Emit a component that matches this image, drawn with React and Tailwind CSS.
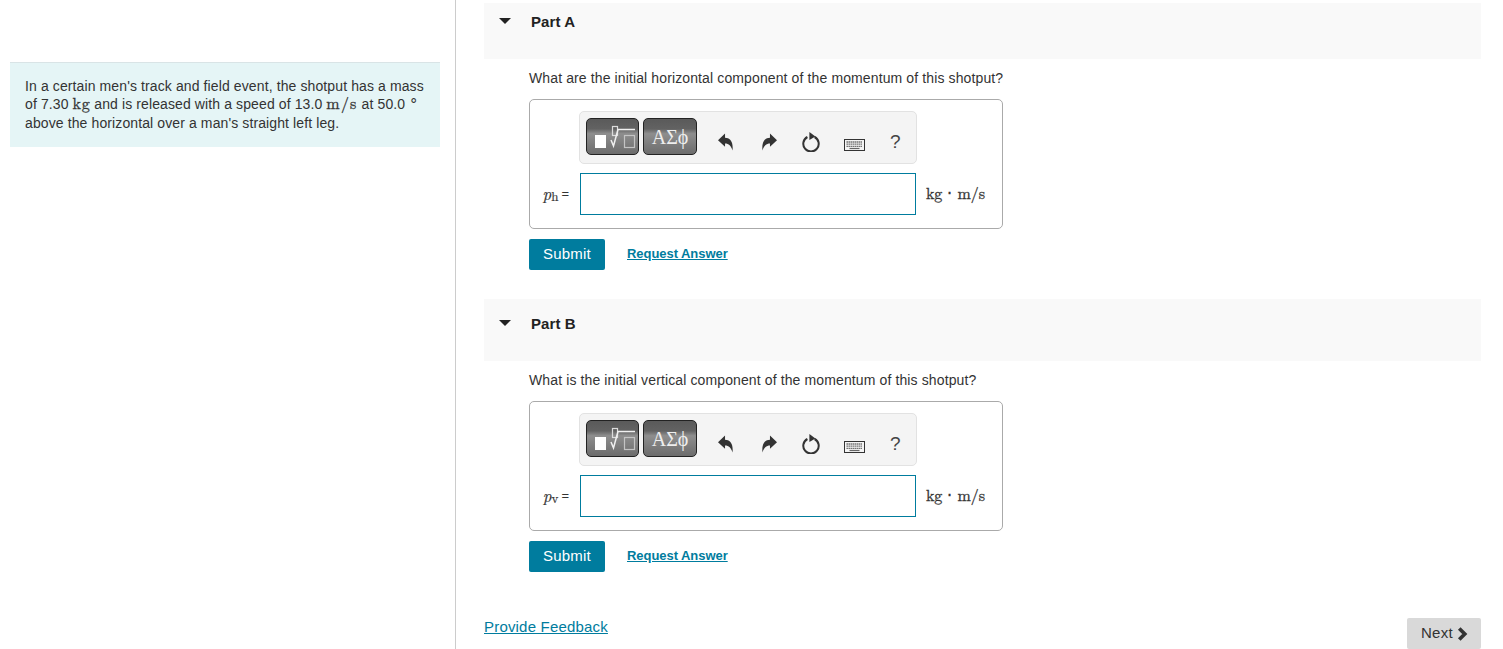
import React from 'react';
import { ChevronRight } from 'lucide-react';

const SANS = { fontFamily: '"Liberation Sans", Arial, sans-serif' };
const serifClass = "font-['Liberation_Serif',serif]";
const mathClass = "font-['Latin_Modern_Roman','Liberation_Serif',serif]";

function TemplatesIcon() {
  return (
    <svg width="51" height="35" viewBox="0 0 51 35" fill="none">
      <rect x="8" y="16" width="11" height="13" fill="#fff" />
      <rect x="25.5" y="7.5" width="5" height="9" stroke="#dcdcdc" strokeWidth="1.2" />
      <path d="M24 21 L26.5 27 L31 10.5 H48" stroke="#f0f0f0" strokeWidth="1.5" />
      <rect x="37.5" y="16.5" width="10" height="12" stroke="#c4c4c4" strokeWidth="1.2" />
    </svg>
  );
}

function UndoIcon({ flip }) {
  return (
    <svg width="15" height="18" viewBox="0 0 16 18" className={flip ? '-scale-x-100' : ''}>
      <path d="M0 7 L7.5 0 V4.4 C12.5 4.4 16.5 8 15.5 18 C14 13 11.5 10.6 7.5 10.6 V14 Z" fill="#333" />
    </svg>
  );
}

function ResetIcon() {
  return (
    <svg width="18" height="20" viewBox="0 0 18 20" fill="none">
      <path d="M5.4 5 A7.7 7.7 0 1 0 12.6 5" stroke="#333" strokeWidth="2" />
      <path d="M7.4 0 L13.4 4.4 L7.4 8 Z" fill="#333" />
    </svg>
  );
}

function KeyboardIcon() {
  return (
    <svg width="21" height="12" viewBox="0 0 21 12" fill="none">
      <rect x="0.5" y="0.5" width="20" height="11" fill="#f4f4f4" stroke="#333" />
      <path d="M2.5 3 H18.5 M2.5 5.2 H18.5 M2.5 7.4 H18.5" stroke="#666" strokeWidth="1.3" strokeDasharray="1.4 .6" />
      <path d="M5.5 9.5 H15.5" stroke="#666" strokeWidth="1.2" />
    </svg>
  );
}

function PaletteButton({ className, children }) {
  return (
    <div className={`flex h-[37px] items-center justify-center rounded-[5px] border border-[#222] bg-[linear-gradient(#5a5a5a_0,#626262_28%,#8e8e8e_42%,#6c6c6c_100%)] ${className}`}>
      {children}
    </div>
  );
}

function Toolbar() {
  return (
    <div className="ml-[49px] flex h-[53px] w-[338px] items-start rounded-[5px] border border-[#e2e2e2] bg-[#f4f4f4] pl-[6px] pt-[6px]">
      <PaletteButton className="w-[53px]">
        <TemplatesIcon />
      </PaletteButton>
      <PaletteButton className="ml-[4px] w-[54px]">
        <span className={`${serifClass} text-[20px] leading-none text-[#eee]`}>ΑΣϕ</span>
      </PaletteButton>
      <div className="ml-[21px] mt-[15px] flex"><UndoIcon /></div>
      <div className="ml-[29px] mt-[15px] flex"><UndoIcon flip /></div>
      <div className="ml-[25px] mt-[14px] flex"><ResetIcon /></div>
      <div className="ml-[24px] mt-[21px] flex"><KeyboardIcon /></div>
      <span className="ml-[25px] mt-[14px] text-[19px] leading-none text-[#444]" style={SANS}>?</span>
    </div>
  );
}

function Part({ title, question, symbol, sub, headerClass }) {
  return (
    <section>
      <div className={`flex items-start bg-[#f9f9f9] pl-[15px] ${headerClass}`}>
        <span className="mt-[4px] h-0 w-0 border-x-[6.5px] border-t-[6.5px] border-x-transparent border-t-[#222]" />
        <h2 className="ml-[20px] text-[15px] font-bold leading-none tracking-[0.1px] text-[#222]">{title}</h2>
      </div>
      <div className="pl-[45px]">
        <p className="mt-[11px] text-[14px] leading-4 tracking-[0.12px] text-[#333]">{question}</p>
        <div className="mt-[13px] h-[130px] w-[474px] rounded-[5px] border border-[#aaa] pt-[11px]">
          <Toolbar />
          <div className="mt-[9px] flex items-center">
            <div className="mb-[2px] flex w-[50px] items-center justify-end pr-[11px] text-[#333]">
              <span className={`${mathClass} text-[17px] italic leading-none [-webkit-text-stroke:0.2px_#333]`}>{symbol}</span>
              <span className={`${mathClass} mt-[5px] text-[13px] leading-none [-webkit-text-stroke:0.2px_#333]`}>{sub}</span>
              <span className="ml-[3px] text-[13px] leading-none" style={SANS}>=</span>
            </div>
            <div className="h-[42px] w-[336px] border border-[#007c9e] bg-white" />
            <span className={`${mathClass} mb-[2px] ml-[10px] text-[16px] leading-none tracking-[-0.1px] text-[#333] [-webkit-text-stroke:0.3px_#333]`}>kg ⋅ m/s</span>
          </div>
        </div>
        <div className="mt-[10px] flex items-start">
          <button className="h-[31px] w-[76px] rounded-[2px] bg-[#007c9e] text-[15px] tracking-[0.2px] text-white">Submit</button>
          <a className="ml-[22px] mt-[7px] text-[13px] font-bold leading-[15px] tracking-[-0.05px] text-[#007c9e] underline">Request Answer</a>
        </div>
      </div>
    </section>
  );
}

export default function App() {
  return (
    <div className="flex h-[649px] w-[1503px] overflow-hidden bg-white" style={SANS}>
      <aside className="h-full w-[456px] shrink-0 border-r border-[#ccc] pl-[10px] pt-[62px]">
        <div className="h-[85px] w-[430px] border-t border-[#d9e4e6] bg-[#e5f5f6] pl-[15px] pt-[14px] text-[14px] leading-[18px] tracking-[0.11px] text-[#333]">
          <p className="h-[18px]">In a certain men's track and field event, the shotput has a mass</p>
          <p className="h-[18px]">
            of 7.30 <span className={`${mathClass} text-[16px] leading-[0] tracking-[0.6px] [-webkit-text-stroke:0.3px_#333]`}>kg</span> and is released with a speed of 13.0 <span className={`${mathClass} text-[16px] leading-[0] tracking-[1.2px] [-webkit-text-stroke:0.3px_#333]`}>m/s</span> at 50.0 <span className={`${serifClass} align-[4px] text-[15px] leading-[0]`}>∘</span>
          </p>
          <p className="mt-[1px] h-[18px]">above the horizontal over a man's straight left leg.</p>
        </div>
      </aside>
      <main className="ml-[28px] flex h-full w-[997px] shrink-0 flex-col pt-[3px]">
        <Part
          title="Part A"
          question="What are the initial horizontal component of the momentum of this shotput?"
          symbol="p"
          sub="h"
          headerClass="h-[56px] pt-[11px]"
        />
        <div className="mt-[29px]">
          <Part
            title="Part B"
            question="What is the initial vertical component of the momentum of this shotput?"
            symbol="p"
            sub="v"
            headerClass="h-[62px] pt-[17px]"
          />
        </div>
        <div className="mt-auto flex items-end justify-between">
          <a className="mb-[13px] text-[15px] leading-[18px] tracking-[0.19px] text-[#007c9e] underline">Provide Feedback</a>
          <button className="flex h-[31px] w-[74px] items-center rounded-[2px] bg-[#d9d9d9] pl-[14px] text-[15px] tracking-[0.25px] text-[#333]">
            Next
            <ChevronRight size={22} strokeWidth={4} strokeLinecap="butt" strokeLinejoin="miter" className="ml-[-2px]" />
          </button>
        </div>
      </main>
    </div>
  );
}
